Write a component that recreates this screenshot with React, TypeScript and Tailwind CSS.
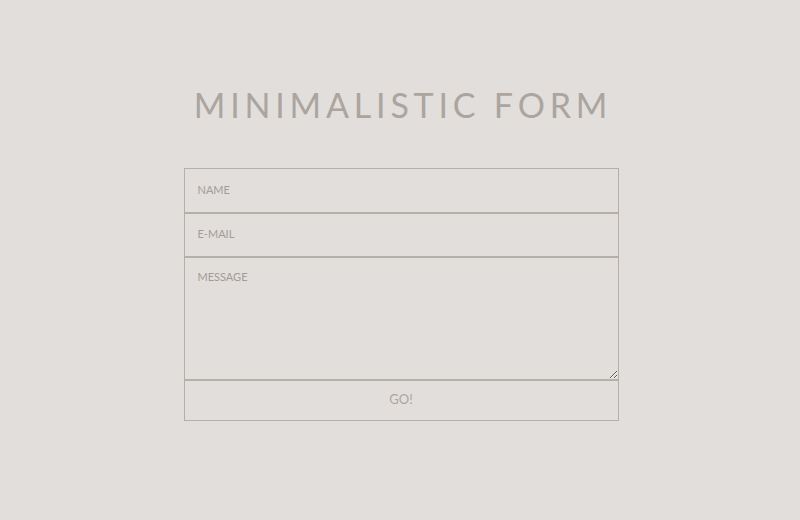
export default function App() {
  return (
    <div
      className="min-h-[520px] w-full bg-[#e2dedb] flex flex-col items-center"
      style={{ fontFamily: "Lato, 'Open Sans', sans-serif" }}
    >
      <h1 className="mt-[84px] text-[34px] leading-[42px] tracking-[4.8px] pl-[6px] font-normal text-[#aca59f]">
        MINIMALISTIC FORM
      </h1>
      <form className="mt-[42px] w-[435px] ml-[2px] flex flex-col">
        <input
          type="text"
          placeholder="NAME"
          className="h-[45px] border border-[#b5afaa] bg-transparent px-[13px] pb-[2px] text-[11px] text-[#8f8984] placeholder:text-[#a39c96] outline-none"
        />
        <input
          type="email"
          placeholder="E-MAIL"
          className="h-[44px] border border-[#b5afaa] bg-transparent px-[13px] pb-[3px] text-[11px] text-[#8f8984] placeholder:text-[#a39c96] outline-none"
        />
        <textarea
          placeholder="MESSAGE"
          className="h-[123px] border border-[#b5afaa] bg-transparent px-[13px] pt-[11px] text-[11px] text-[#8f8984] placeholder:text-[#a39c96] outline-none block"
        />
        <button
          type="button"
          className="h-[41px] border border-[#b5afaa] bg-transparent pb-[2px] text-[13px] text-[#aca59f]"
        >
          GO!
        </button>
      </form>
    </div>
  );
}
